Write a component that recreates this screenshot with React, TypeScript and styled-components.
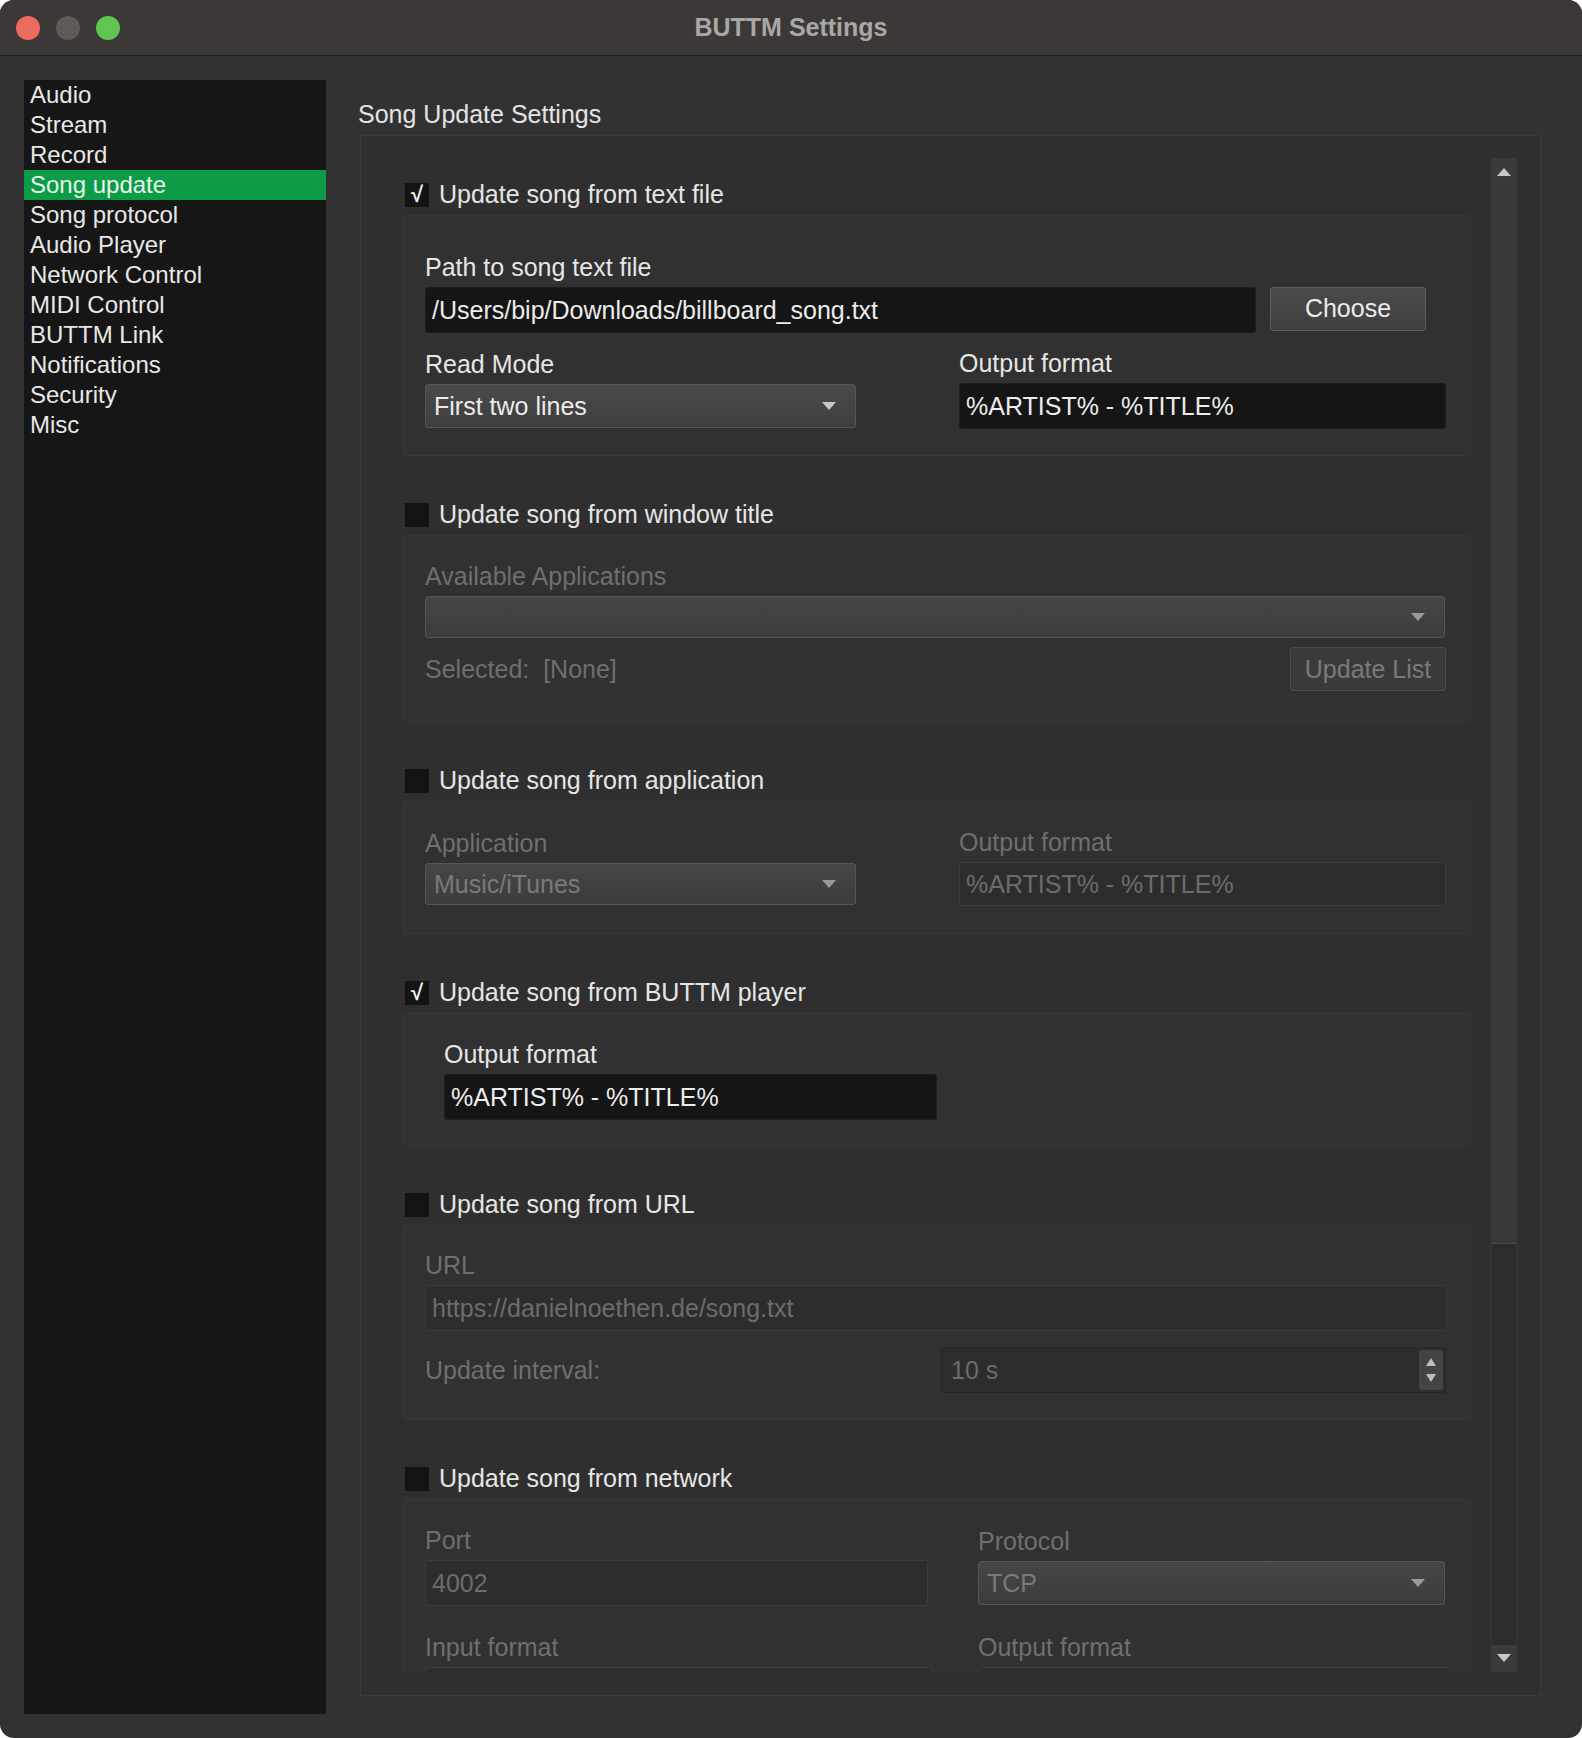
import React from "react";
import styled, { createGlobalStyle } from "styled-components";

const GlobalStyle = createGlobalStyle`
  html, body { margin: 0; padding: 0; background: #ffffff; }
  body { font-family: "Liberation Sans", Arial, sans-serif; }
`;

const pages = [
  "Audio", "Stream", "Record", "Song update", "Song protocol", "Audio Player",
  "Network Control", "MIDI Control", "BUTTM Link", "Notifications", "Security", "Misc",
];

// ---------------- Small parts ----------------
const Arrow: React.FC<{ dim?: boolean }> = ({ dim }) => (
  <svg width="16" height="10" viewBox="0 0 16 10">
    <path d="M1 1 L15 1 L8 9 Z" fill={dim ? "#9a9a9a" : "#c8c8c8"} />
  </svg>
);

const Check: React.FC<{ on?: boolean; label: string }> = ({ on, label }) => (
  <CheckRow>
    <Box>{on ? "√" : ""}</Box>
    {label}
  </CheckRow>
);

const App: React.FC = () => (
  <>
    <GlobalStyle />
    <Window>
      <TitleBar>
        <Lights>
          <Light color="#ec6a5e" />
          <Light color="#5d5a58" />
          <Light color="#61c554" />
        </Lights>
        <WinTitle>BUTTM Settings</WinTitle>
      </TitleBar>

      <Body>
        <Sidebar>
          {pages.map((p) => (
            <NavItem key={p} active={p === "Song update"}>{p}</NavItem>
          ))}
        </Sidebar>

        <Main>
          <Header>Song Update Settings</Header>
          <Panel>
            <Viewport>
              <Check on label="Update song from text file" />
              <Group pt={38} pb={26}>
                <Label>Path to song text file</Label>
                <Row gap={14}>
                  <Field w={831}>/Users/bip/Downloads/billboard_song.txt</Field>
                  <Button>Choose</Button>
                </Row>
                <Row gap={103} top={17}>
                  <Col>
                    <Label>Read Mode</Label>
                    <Combo w={431}>First two lines<Arrow /></Combo>
                  </Col>
                  <Col>
                    <Label>Output format</Label>
                    <Field w={487}>%ARTIST% - %TITLE%</Field>
                  </Col>
                </Row>
              </Group>

              <Check label="Update song from window title" />
              <Group pt={27} pb={30}>
                <Label dim>Available Applications</Label>
                <Combo w={1020} dim h={42}><span /><Arrow dim /></Combo>
                <Row top={9} between>
                  <Label dim noMargin>Selected:&nbsp; [None]</Label>
                  <Button dim flat>Update List</Button>
                </Row>
              </Group>

              <Check label="Update song from application" />
              <Group pt={27} pb={27}>
                <Row gap={103}>
                  <Col>
                    <Label dim>Application</Label>
                    <Combo w={431} dim h={42}>Music/iTunes<Arrow dim /></Combo>
                  </Col>
                  <Col>
                    <Label dim>Output format</Label>
                    <Field w={487} dim h={44}>%ARTIST% - %TITLE%</Field>
                  </Col>
                </Row>
              </Group>

              <Check on label="Update song from BUTTM player" />
              <Group pt={27} pb={25} pl={40}>
                <Label>Output format</Label>
                <Field w={493}>%ARTIST% - %TITLE%</Field>
              </Group>

              <Check label="Update song from URL" />
              <Group pt={26} pb={26}>
                <Label dim>URL</Label>
                <Field w={1022} dim>https://danielnoethen.de/song.txt</Field>
                <Row top={16} between>
                  <Label dim noMargin>Update interval:</Label>
                  <Spin>
                    <span>10 s</span>
                    <Stepper>
                      <svg width="14" height="30" viewBox="0 0 14 30">
                        <path d="M2 11 L12 11 L7 3 Z" fill="#bdbdbd" />
                        <path d="M2 19 L12 19 L7 27 Z" fill="#bdbdbd" />
                      </svg>
                    </Stepper>
                  </Spin>
                </Row>
              </Group>

              <Check label="Update song from network" />
              <Group pt={27} pb={24}>
                <Row gap={50}>
                  <Col>
                    <Label dim>Port</Label>
                    <Field w={503} dim>4002</Field>
                  </Col>
                  <Col>
                    <Label dim>Protocol</Label>
                    <Combo w={467} dim h={44}>TCP<Arrow dim /></Combo>
                  </Col>
                </Row>
                <Row gap={45} top={28}>
                  <Col>
                    <Label dim>Input format</Label>
                    <Field w={508} dim>%ARTIST% %TITLE%</Field>
                  </Col>
                  <Col>
                    <Label dim>Output format</Label>
                    <Field w={473} dim>%ARTIST% - %TITLE%</Field>
                  </Col>
                </Row>
              </Group>
            </Viewport>

            <ScrollBar>
              <ScrollBtn>
                <svg width="16" height="10" viewBox="0 0 16 10"><path d="M1 9 L15 9 L8 1 Z" fill="#c8c8c8" /></svg>
              </ScrollBtn>
              <Track>
                <Handle />
              </Track>
              <ScrollBtn>
                <svg width="16" height="10" viewBox="0 0 16 10"><path d="M1 1 L15 1 L8 9 Z" fill="#c8c8c8" /></svg>
              </ScrollBtn>
            </ScrollBar>
          </Panel>
        </Main>
      </Body>
    </Window>
  </>
);

// ---------------- Styled Components ----------------
const Window = styled.div`
  width: 1582px;
  height: 1738px;
  background: #323232;
  border-radius: 14px;
  overflow: hidden;
  display: flex;
  flex-direction: column;
  color: #e4e4e4;
`;

const TitleBar = styled.div`
  height: 56px;
  flex-shrink: 0;
  background: #3b3837;
  border-bottom: 1px solid #1c1c1c;
  box-sizing: border-box;
  display: flex;
  align-items: center;
  position: relative;
`;

const Lights = styled.div`
  display: flex;
  gap: 16px;
  padding-left: 16px;
`;

const Light = styled.div<{ color: string }>`
  width: 24px;
  height: 24px;
  border-radius: 50%;
  background: ${(p) => p.color};
`;

const WinTitle = styled.div`
  position: absolute;
  left: 0;
  right: 0;
  text-align: center;
  font-size: 25px;
  font-weight: bold;
  color: #a9a7a5;
  pointer-events: none;
`;

const Body = styled.div`
  flex: 1;
  display: flex;
  padding: 24px 41px 24px 24px;
  gap: 32px;
  min-height: 0;
`;

const Sidebar = styled.div`
  width: 302px;
  background: #161616;
  display: flex;
  flex-direction: column;
  flex-shrink: 0;
`;

const NavItem = styled.div<{ active?: boolean }>`
  height: 30px;
  line-height: 30px;
  padding-left: 6px;
  font-size: 24px;
  color: ${(p) => (p.active ? "#e8f5ec" : "#e8e8e8")};
  background: ${(p) => (p.active ? "#0c9c48" : "transparent")};
`;

const Main = styled.div`
  flex: 1;
  display: flex;
  flex-direction: column;
  min-width: 0;
`;

const Header = styled.div`
  font-size: 25px;
  height: 30px;
  line-height: 30px;
  margin: 19px 0 6px;
  color: #e4e4e4;
`;

const Panel = styled.div`
  height: 1561px;
  margin-left: 2px;
  border: 1px solid #3a3a3a;
  background: #2f2f2f;
  box-sizing: border-box;
  display: flex;
  padding: 22px 23px 23px 0;
`;

const Viewport = styled.div`
  flex: 1;
  overflow: hidden;
  padding: 22px 20px 0 42px;
  display: flex;
  flex-direction: column;
`;

const CheckRow = styled.div`
  display: flex;
  align-items: center;
  gap: 10px;
  height: 30px;
  font-size: 25px;
  color: #e6e6e6;
  margin-left: 2px;
`;

const Box = styled.div`
  width: 24px;
  height: 24px;
  background: #141414;
  color: #f0f0f0;
  font-size: 22px;
  font-weight: bold;
  display: flex;
  align-items: center;
  justify-content: center;
  flex-shrink: 0;
`;

const Group = styled.div<{ pt: number; pb: number; pl?: number }>`
  margin: 6px 0 44px;
  padding: ${(p) => `${p.pt}px 24px ${p.pb}px ${p.pl ?? 21}px`};
  border: 1px solid #383838;
  border-radius: 3px;
  background: #313131;
  display: flex;
  flex-direction: column;
  flex-shrink: 0;
`;

const Label = styled.div<{ dim?: boolean; noMargin?: boolean }>`
  font-size: 25px;
  height: 26px;
  line-height: 26px;
  margin-bottom: ${(p) => (p.noMargin ? 0 : 7)}px;
  color: ${(p) => (p.dim ? "#6f6f6f" : "#e6e6e6")};
  white-space: nowrap;
`;

const Row = styled.div<{ gap?: number; top?: number; between?: boolean }>`
  display: flex;
  align-items: center;
  gap: ${(p) => p.gap ?? 0}px;
  margin-top: ${(p) => p.top ?? 0}px;
  justify-content: ${(p) => (p.between ? "space-between" : "flex-start")};
`;

const Col = styled.div`
  display: flex;
  flex-direction: column;
`;

const Field = styled.div<{ w: number; dim?: boolean; h?: number }>`
  width: ${(p) => p.w}px;
  height: ${(p) => p.h ?? 46}px;
  box-sizing: border-box;
  padding: 0 6px;
  display: flex;
  align-items: center;
  font-size: 25px;
  border-radius: 3px;
  white-space: nowrap;
  overflow: hidden;
  background: ${(p) => (p.dim ? "#2d2d2d" : "#151515")};
  border: 1px solid ${(p) => (p.dim ? "#3c3c3c" : "#1e1e1e")};
  color: ${(p) => (p.dim ? "#6c6c6c" : "#ececec")};
`;

const Combo = styled.div<{ w: number; dim?: boolean; h?: number }>`
  width: ${(p) => p.w}px;
  height: ${(p) => p.h ?? 44}px;
  box-sizing: border-box;
  padding: 0 18px 0 8px;
  display: flex;
  align-items: center;
  justify-content: space-between;
  font-size: 25px;
  border-radius: 3px;
  background: ${(p) =>
    p.dim ? "linear-gradient(#464646, #3c3c3c)" : "linear-gradient(#4a4a4a, #3e3e3e)"};
  border: 1px solid #565656;
  color: ${(p) => (p.dim ? "#7a7a7a" : "#ececec")};
`;

const Button = styled.div<{ dim?: boolean; flat?: boolean }>`
  width: 156px;
  height: 44px;
  box-sizing: border-box;
  display: flex;
  align-items: center;
  justify-content: center;
  font-size: 25px;
  border-radius: 3px;
  background: ${(p) => (p.dim ? "#3a3a3a" : "linear-gradient(#4a4a4a, #404040)")};
  border: 1px solid ${(p) => (p.dim ? "#4c4c4c" : "#5e5e5e")};
  color: ${(p) => (p.dim ? "#7a7a7a" : "#ececec")};
  margin-top: ${(p) => (p.flat ? 0 : -3)}px;
`;

const Spin = styled.div`
  width: 505px;
  height: 46px;
  box-sizing: border-box;
  display: flex;
  align-items: center;
  justify-content: space-between;
  padding-left: 9px;
  font-size: 25px;
  color: #6c6c6c;
  background: #2d2d2d;
  border: 1px solid #262626;
  border-radius: 3px;
`;

const Stepper = styled.div`
  width: 24px;
  height: 40px;
  margin-right: 2px;
  background: #444;
  border-radius: 3px;
  display: flex;
  align-items: center;
  justify-content: center;
`;

const ScrollBar = styled.div`
  width: 26px;
  flex-shrink: 0;
  display: flex;
  flex-direction: column;
  background: #2c2c2c;
  border: 1px solid #3a3a3a;
  box-sizing: border-box;
`;

const ScrollBtn = styled.div`
  height: 26px;
  display: flex;
  align-items: center;
  justify-content: center;
  background: #3b3b3b;
`;

const Track = styled.div`
  flex: 1;
  display: flex;
  flex-direction: column;
`;

const Handle = styled.div`
  height: 1058px;
  background: #393939;
  border-bottom: 1px solid #4a4a4a;
`;

export default App;
